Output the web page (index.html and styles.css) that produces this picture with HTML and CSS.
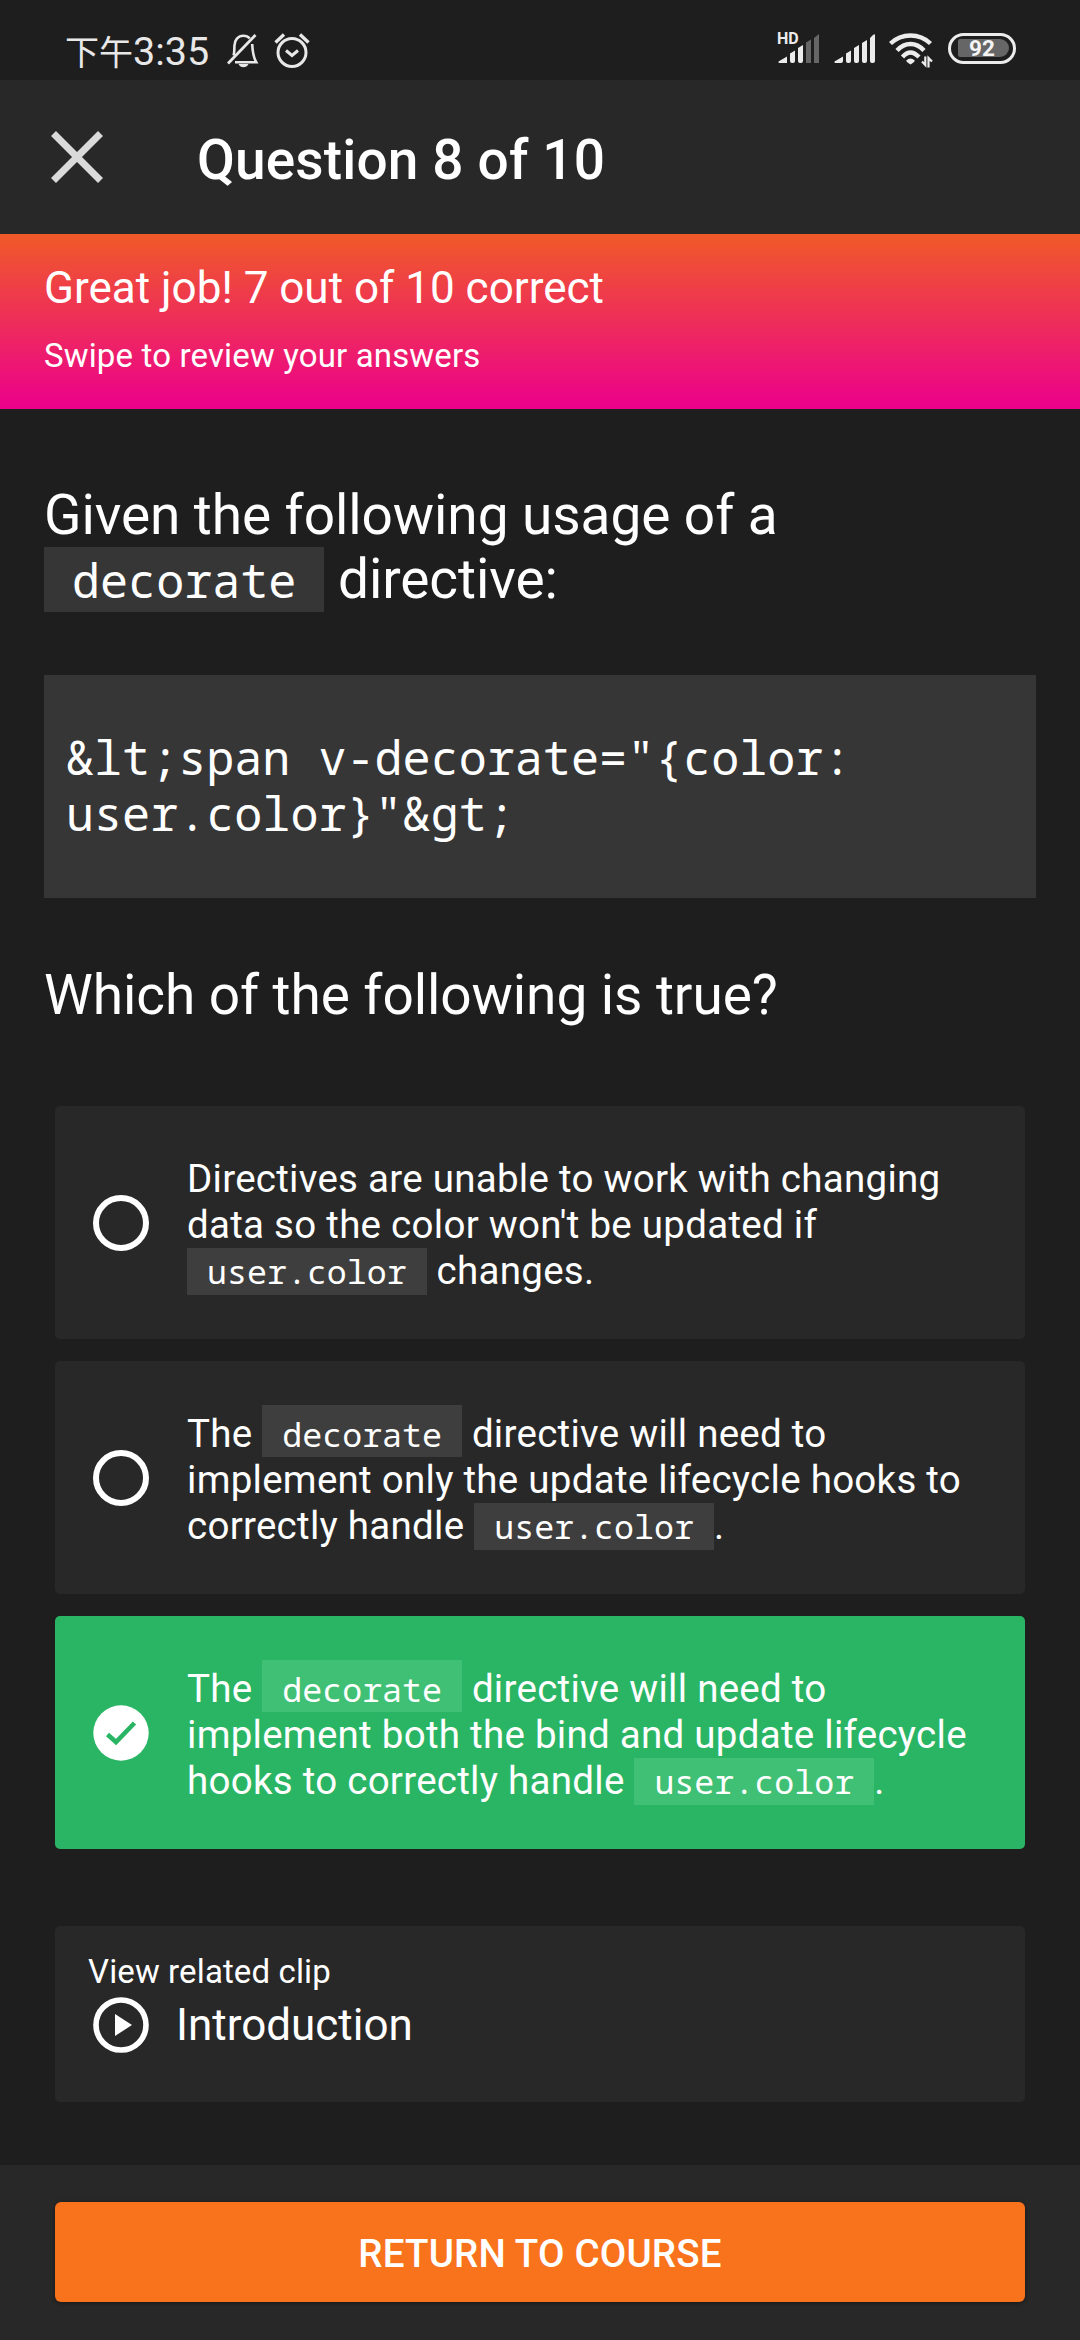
FILE: index.html
```html
<!DOCTYPE html>
<html lang="en">
<head>
<meta charset="utf-8">
<title>Question 8 of 10</title>
<link rel="stylesheet" href="styles.css">
</head>
<body>
<div class="screen">
  <div class="status">
    <div class="clock"><span class="clock-cjk">下午</span>3:35</div>
    <svg class="bell" width="36" height="36" viewBox="0 0 36 36" fill="none" stroke="#e8e8e8" stroke-width="2.6">
      <path d="M8.5 23.5c.8-2 .9-4 .9-9.5 0-6 3.600-10.300 9-10.300 2.600 0 4.800.9 6.300 2.600M27.200 12c.3 6 .5 12 4 18.200H10"/>
      <path d="M3 31.500 30.500 3" stroke-width="2.800"/>
      <path d="M13.500 32h10c-1 2.200-2.900 3.200-5 3.200s-4-1-5-3.200z" fill="#e8e8e8" stroke="none"/>
    </svg>
    <svg class="alarm" width="36" height="36" viewBox="0 0 36 36" fill="none" stroke="#e8e8e8" stroke-width="3">
      <circle cx="18" cy="20.500" r="14"/>
      <path d="M1.500 10.500 10 2.500M34.500 10.500 26 2.500" stroke-width="3.400"/>
      <path d="M12 18.500 18 23.500 24 18.500" stroke-width="3"/>
    </svg>
    <svg class="signals" width="101" height="36" viewBox="0 0 101 36" fill="#ececec">
      <text class="hd" x="0" y="12">HD</text>
      <path d="M1.500 29.500 10 24.500V31H3.500Q1 31 1.500 29.500zM13 21.500 18 18.500V29q0 2-2 2h-1q-2 0-2-2zM21 16 26 13V29q0 2-2 2h-1q-2 0-2-2z"/>
      <path fill="#666" d="M29 10.500 34 7.500V31H29zM37 6 42 2V31H37z"/>
      <path d="M57.500 29.500 66 24.500V29q0 2-2 2H59.500Q57 31 57.500 29.500zM69 21.500 74 18.500V29q0 2-2 2h-1q-2 0-2-2zM77 16 82 13V29q0 2-2 2h-1q-2 0-2-2zM85 11 90 8V29q0 2-2 2h-1q-2 0-2-2zM93 6 96 3q2-1.500 2 .5V29q0 2-2 2h-1q-2 0-2-2z"/>
    </svg>
    <svg class="wifi" width="44" height="36" viewBox="0 0 44 36" fill="none" stroke="#ececec" stroke-width="4.400">
      <path d="M1.500 11.500Q10 3.500 21.500 3.500T41.500 11.500M8 18.500Q14 12 21.500 12T35 18.500M13.500 25Q17.500 20.500 21.500 20.500T30 25"/>
      <path d="M17.200 28.500q4.300-4 8.600 0 0 1.500-4.300 4-4.300-2.500-4.300-4z" fill="#ececec" stroke="none"/>
      <path d="M36.300 24.500V33L33 29.500M39.500 35.500V26l3.500 3.500" stroke-width="2.200"/>
    </svg>
    <div class="battery"><span class="battery-level">92</span></div>
  </div>

  <header class="topbar">
    <svg class="close" width="52" height="52" viewBox="0 0 52 52" stroke="#dadada" stroke-width="7">
      <path d="M2.500 2.500 49.500 49.500M49.500 2.500 2.500 49.500"/>
    </svg>
    <h1 class="title">Question 8 of 10</h1>
  </header>

  <section class="banner">
    <div class="score">Great job! 7 out of 10 correct</div>
    <div class="hint">Swipe to review your answers</div>
  </section>

  <main class="content">
    <p class="question">Given the following usage of a<br><code class="chip chip-large">decorate</code> directive:</p>
    <pre class="snippet">&amp;lt;span v-decorate="{color:
user.color}"&amp;gt;</pre>
    <p class="question">Which of the following is true?</p>

    <div class="answers">
      <div class="card answer">
        <span class="radio"></span>
        <p class="answer-text">Directives are unable to work with changing<br>data so the color won't be updated if<br><code class="chip">user.color</code> changes.</p>
      </div>
      <div class="card answer">
        <span class="radio"></span>
        <p class="answer-text">The <code class="chip chip-first">decorate</code> directive will need to<br>implement only the update lifecycle hooks to<br>correctly handle <code class="chip">user.color</code>.</p>
      </div>
      <div class="card answer correct">
        <svg class="check" width="56" height="56" viewBox="0 0 56 56">
          <circle cx="28" cy="28" r="27.700" fill="#fff"/>
          <path d="M14.500 29.500 23 37 41.500 18" fill="none" stroke="#2ab565" stroke-width="4.600"/>
        </svg>
        <p class="answer-text">The <code class="chip chip-first">decorate</code> directive will need to<br>implement both the bind and update lifecycle<br>hooks to correctly handle <code class="chip">user.color</code>.</p>
      </div>
    </div>

    <div class="card related">
      <div class="related-label">View related clip</div>
      <div class="related-row">
        <svg class="play" width="56" height="56" viewBox="0 0 56 56">
          <circle cx="28" cy="28" r="25" fill="none" stroke="#fff" stroke-width="5.600"/>
          <path d="M22 17v22l17-11z" fill="#fff"/>
        </svg>
        <span class="related-title">Introduction</span>
      </div>
    </div>
  </main>

  <footer class="footer">
    <button class="return">RETURN TO COURSE</button>
  </footer>
</div>
</body>
</html>
```

FILE: styles.css
```css
* { box-sizing: border-box; }
body {
  margin: 0;
  background: #1e1e1e;
  color: #fff;
  font-family: Roboto, "Liberation Sans", sans-serif;
}
h1, p, pre { margin: 0; font-weight: 400; }
svg { display: block; flex: none; overflow: visible; }

.screen {
  width: 1080px;
  height: 2340px;
  display: flex;
  flex-direction: column;
  overflow: hidden;
}

/* Status bar */
.status {
  height: 80px;
  flex: none;
  display: flex;
  align-items: flex-start;
  padding: 32px 64px 0 66px;
}
.clock {
  display: flex;
  width: 159px;
  height: 40px;
  line-height: 39px;
  font-size: 39.5px;
  color: #e8e8e8;
  white-space: nowrap;
}
.clock-cjk {
  width: 67px;
  margin-left: -1px;
  margin-right: 1px;
  font-family: "Noto Sans CJK SC", sans-serif;
  font-size: 34px;
  line-height: 37px;
}
.alarm { margin-left: 13px; }
.signals { margin-left: auto; }
.hd {
  font-family: Roboto, sans-serif;
  font-size: 16px;
  font-weight: 700;
}
.wifi { margin-left: 11px; }
.battery {
  margin: 1px 0 0 15px;
  width: 68px;
  height: 31px;
  border: 3.5px solid #ececec;
  border-radius: 16px;
  padding: 3px 4px 3px 7px;
}
.battery-level {
  display: block;
  height: 18px;
  border-radius: 2px 9px 9px 2px;
  background: #666;
  font-size: 22.5px;
  font-weight: 700;
  line-height: 19px;
  text-align: center;
  color: #f4f4f4;
  padding-right: 3px;
}

/* Top bar */
.topbar {
  height: 154px;
  flex: none;
  background: #282828;
  display: flex;
  align-items: center;
  padding: 0 51px 0 51px;
}
.title {
  margin: 6px 0 0 94px;
  font-size: 55px;
  font-weight: 500;
  line-height: 64px;
  letter-spacing: .14px;
}

/* Result banner */
.banner {
  height: 175px;
  flex: none;
  padding: 28px 44px 0;
  background: linear-gradient(#f05a28, #ec008c);
}
.score { font-size: 44px; line-height: 52px; }
.hint { margin-top: 22px; font-size: 33px; line-height: 40px; letter-spacing: .15px; }

/* Question */
.content {
  flex: 1;
  padding: 73px 44px 0;
}
.question {
  padding-top: 1px;
  font-size: 55px;
  line-height: 64px;
  letter-spacing: -.08px;
}
.chip {
  font-family: "Droid Sans Mono", "Noto Sans Mono", "DejaVu Sans Mono", monospace;
  font-size: 33.3px;
  line-height: 1;
  letter-spacing: 0;
  padding: 0 20px 1px;
  background: #3e3e3e;
}
.chip-first { padding-top: 6px; padding-bottom: 0; }
.chip-large {
  font-size: 46.75px;
  padding: 1px 28px 0;
  background: #363636;
}
.snippet {
  margin: 64px 0;
  height: 223px;
  padding: 54px 22px 0;
  background: #363636;
  font-family: "Droid Sans Mono", "Noto Sans Mono", "DejaVu Sans Mono", monospace;
  font-size: 46.75px;
  line-height: 56px;
}

/* Answers */
.answers {
  margin: 79px 11px 0;
  display: flex;
  flex-direction: column;
  gap: 22px;
}
.card {
  background: #282828;
  border-radius: 5px;
}
.answer {
  height: 233px;
  display: flex;
  align-items: center;
  padding-left: 38px;
}
.radio {
  width: 56px;
  height: 56px;
  flex: none;
  border: 6px solid #fff;
  border-radius: 50%;
}
.answer-text {
  margin: 5px 0 0 38px;
  font-size: 38.5px;
  line-height: 46px;
  letter-spacing: .27px;
  white-space: nowrap;
}
.correct { background: #2ab565; }
.correct .chip { background: #40c074; }

/* Related clip */
.related {
  margin: 77px 11px 0;
  height: 176px;
  padding: 26px 33px 0;
}
.related-label { font-size: 33px; line-height: 40px; letter-spacing: .12px; }
.related-row {
  display: flex;
  align-items: center;
  margin: 5px 0 0 5px;
}
.related-title { margin-left: 27px; font-size: 44px; line-height: 52px; }

/* Footer */
.footer {
  height: 175px;
  flex: none;
  background: #282828;
  padding: 37px 55px 0;
}
.return {
  display: block;
  width: 100%;
  height: 100px;
  padding: 2px 0 0;
  border: 0;
  border-radius: 6px;
  background: #f9731c;
  box-shadow: 0 1px 4px rgba(0, 0, 0, .45);
  color: #fff;
  font-family: inherit;
  font-size: 38.5px;
  font-weight: 500;
  letter-spacing: .18px;
}
```
